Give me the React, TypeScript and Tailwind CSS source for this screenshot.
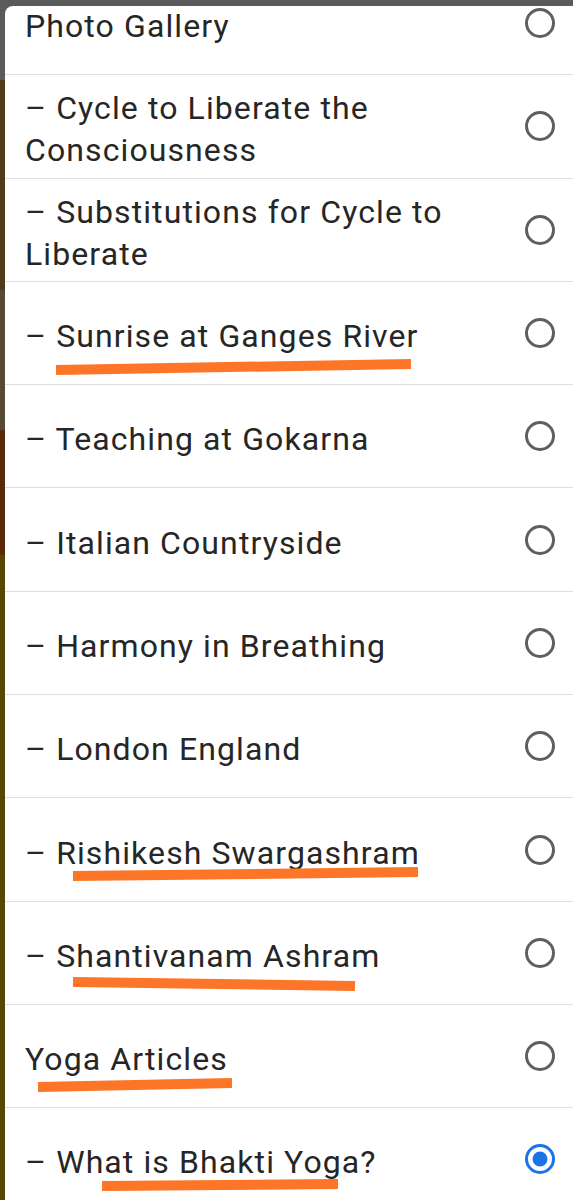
import React from 'react';

type Item = { label: string; sub?: boolean; checked?: boolean };

const items: Item[] = [
  { label: 'Photo Gallery' },
  { label: 'Cycle to Liberate the Consciousness', sub: true },
  { label: 'Substitutions for Cycle to Liberate', sub: true },
  { label: 'Sunrise at Ganges River', sub: true },
  { label: 'Teaching at Gokarna', sub: true },
  { label: 'Italian Countryside', sub: true },
  { label: 'Harmony in Breathing', sub: true },
  { label: 'London England', sub: true },
  { label: 'Rishikesh Swargashram', sub: true },
  { label: 'Shantivanam Ashram', sub: true },
  { label: 'Yoga Articles' },
  { label: 'What is Bhakti Yoga?', sub: true, checked: true },
];

function Radio({ checked }: { checked?: boolean }) {
  if (checked) {
    return (
      <svg width="32" height="32" viewBox="0 0 32 32">
        <circle cx="16" cy="16" r="13.5" fill="none" stroke="#1a73e8" strokeWidth="3" />
        <circle cx="16" cy="16" r="7.5" fill="#1a73e8" />
      </svg>
    );
  }
  return (
    <svg width="32" height="32" viewBox="0 0 32 32">
      <circle cx="16" cy="16" r="13.5" fill="none" stroke="#5f5f5f" strokeWidth="3" />
    </svg>
  );
}

// hand-drawn highlight strokes over the list
const strokes = [
  { x1: 56, y1: 370, x2: 411, y2: 364 },
  { x1: 73, y1: 876, x2: 418, y2: 872 },
  { x1: 73, y1: 982, x2: 355, y2: 986 },
  { x1: 38, y1: 1087, x2: 232, y2: 1083 },
  { x1: 102, y1: 1186, x2: 338, y2: 1184 },
];

export default function App() {
  return (
    <div
      className="relative w-[573px] h-[1200px] overflow-hidden bg-[#5a5a5a] flex flex-col"
      style={{ fontFamily: 'Roboto, "Noto Sans", sans-serif' }}
    >
      <div className="h-[6px] shrink-0" />
      <div className="flex flex-1 min-h-0">
        <div className="w-[5px] shrink-0 flex flex-col">
          <div className="h-[74px] bg-[#5b5b5b]" />
          <div className="h-[210px] bg-[#4d3b1c]" />
          <div className="h-[140px] bg-[#574a35]" />
          <div className="h-[125px] bg-[#5a2a08]" />
          <div className="flex-1 bg-[#584700]" />
        </div>
        <div className="flex-1 bg-white rounded-tl-[8px] overflow-hidden">
          <div className="-mt-[34px]">
            {items.map((it) => (
              <div
                key={it.label}
                className="h-[103.3px] flex items-center border-b border-[#dedede] pl-[20px] pr-[17px] gap-[28px]"
              >
                <div className="flex-1 pt-[6px] text-[32px] leading-[42px] text-[#262626] tracking-[1.1px]">
                  {it.sub ? '– ' : ''}
                  {it.label}
                </div>
                <Radio checked={it.checked} />
              </div>
            ))}
          </div>
        </div>
      </div>
      <svg className="absolute inset-0 pointer-events-none" width="573" height="1200">
        {strokes.map((s, i) => (
          <line
            key={i}
            x1={s.x1}
            y1={s.y1}
            x2={s.x2}
            y2={s.y2}
            stroke="#fd7527"
            strokeWidth="10"
          />
        ))}
      </svg>
    </div>
  );
}
